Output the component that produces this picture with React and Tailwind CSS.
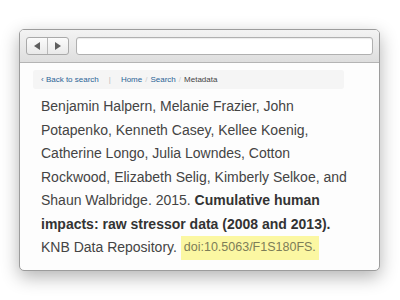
import React from 'react';

const App = () => {
    return (
        <div className="w-[400px] h-[300px] bg-white pt-[29px] pl-[19px] font-['Liberation_Sans',Arial,sans-serif]">
            {/* Browser window */}
            <div className="w-[361px] h-[242px] rounded-[5px] border border-[#9c9c9c] bg-[#fdfdfd] overflow-hidden shadow-[0_6px_18px_rgba(0,0,0,0.3)]">
                {/* Toolbar */}
                <div className="h-[33px] flex items-center gap-[7px] pl-[6px] pr-[6px] bg-gradient-to-b from-[#f3f3f3] to-[#dedede] border-b border-[#b4b4b4]">
                    <div className="flex w-[43px] h-[18px] rounded-[3px] border border-[#a9a9a9] bg-gradient-to-b from-[#fbfbfb] to-[#e9e9e9]">
                        <div className="flex-1 flex items-center justify-center border-r border-[#b9b9b9]">
                            <div className="w-0 h-0 border-y-[4px] border-y-transparent border-r-[6px] border-r-[#5e5e5e]" />
                        </div>
                        <div className="flex-1 flex items-center justify-center">
                            <div className="w-0 h-0 border-y-[4px] border-y-transparent border-l-[6px] border-l-[#5e5e5e]" />
                        </div>
                    </div>
                    <div className="flex-1 h-[18px] rounded-[3px] border border-[#b0b0b0] bg-white shadow-[inset_0_1px_1px_rgba(0,0,0,0.08)]" />
                </div>

                {/* Content */}
                <div className="pt-[7px] pl-[13px]">
                    <div className="w-[311px] h-[19px] bg-[#f5f5f5] rounded-[3px] flex items-center pl-[8px] text-[8px] text-[#2a6496]">
                        <span>‹ Back to search</span>
                        <span className="ml-[10px] text-[#bbbbbb]">|</span>
                        <span className="ml-[10px]">Home</span>
                        <span className="mx-[3px] text-[#cccccc]">/</span>
                        <span>Search</span>
                        <span className="mx-[3px] text-[#cccccc]">/</span>
                        <span className="text-[#444444]">Metadata</span>
                    </div>

                    <p className="mt-[6px] ml-[8px] w-[312px] text-[14px] leading-[23.5px] text-[#444444]">
                        Benjamin Halpern, Melanie Frazier, John Potapenko, Kenneth Casey, Kellee Koenig,
                        Catherine Longo, Julia Lowndes, Cotton Rockwood, Elizabeth Selig, Kimberly Selkoe, and
                        Shaun Walbridge. 2015. <b className="text-[#333333]">Cumulative human impacts: raw stressor data (2008 and 2013).</b>{' '}
                        KNB Data Repository.{' '}
                        <span className="inline-block align-top px-[3px] bg-[#fbf7a2] text-[#7d7d58] text-[12.5px]">doi:10.5063/F1S180FS.</span>
                    </p>
                </div>
            </div>
        </div>
    );
};

export default App;
